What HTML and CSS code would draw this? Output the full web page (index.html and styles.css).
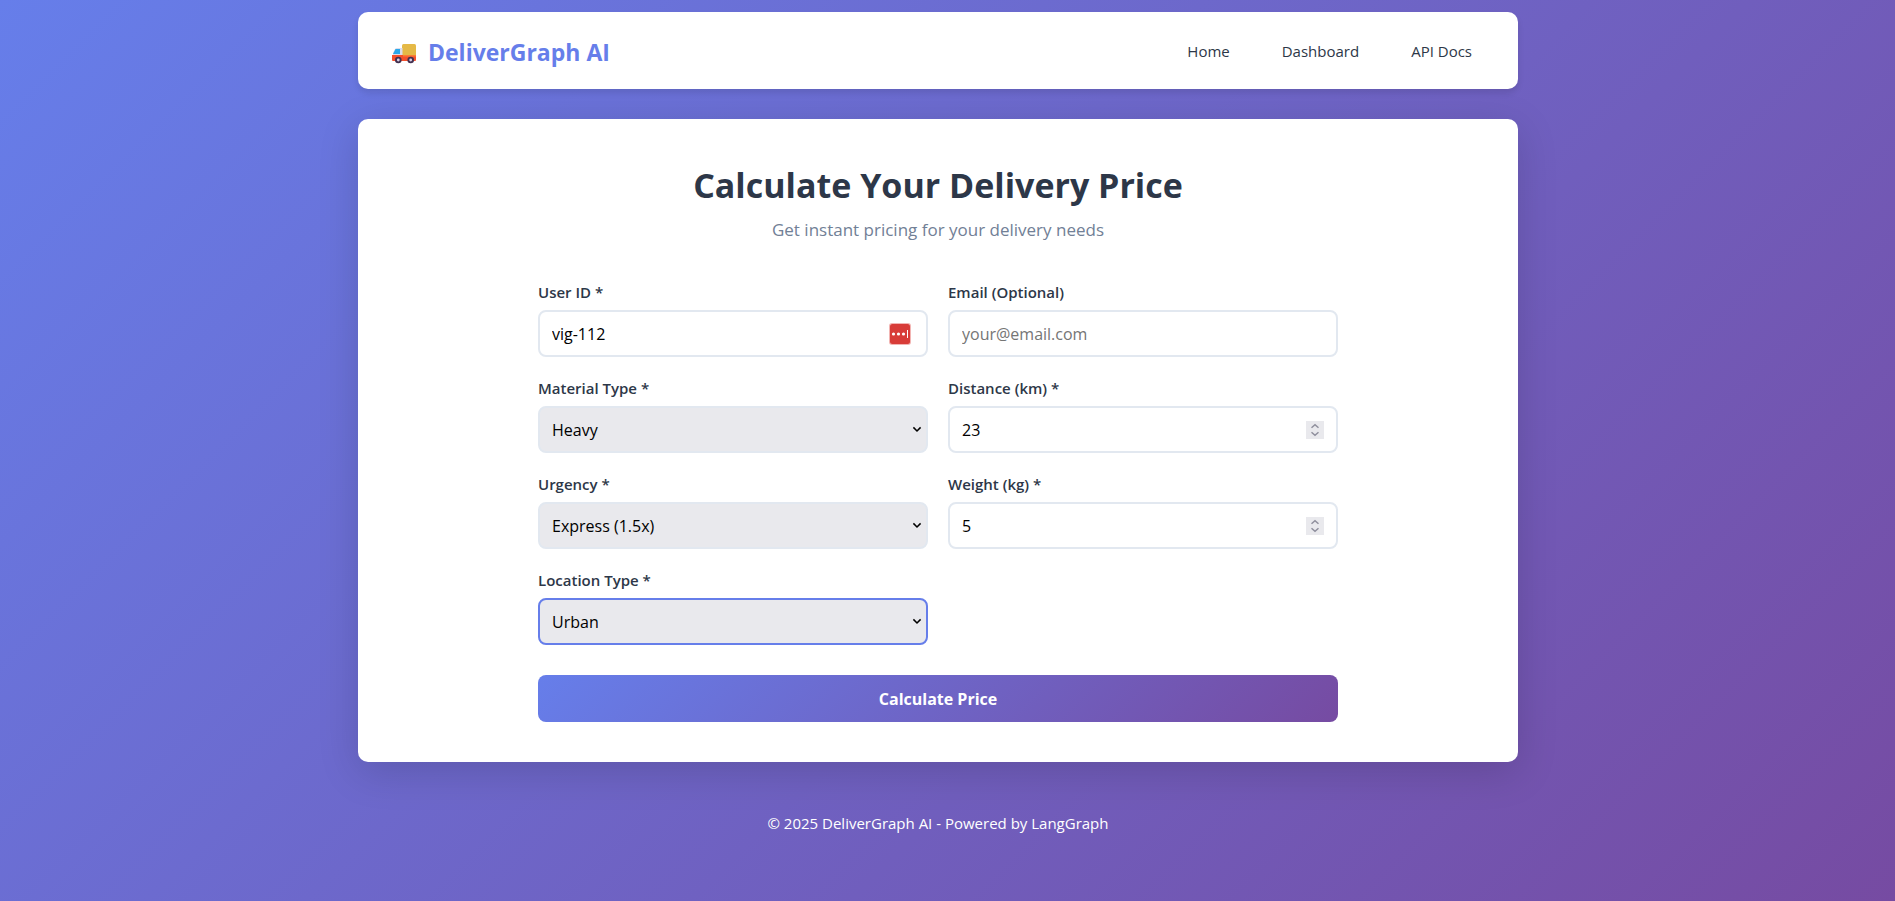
FILE: index.html
```html
<!DOCTYPE html>
<html lang="en">
<head>
<meta charset="utf-8">
<meta name="viewport" content="width=device-width, initial-scale=1">
<title>DeliverGraph AI</title>
<link rel="stylesheet" href="styles.css">
</head>
<body>
<div class="container">
  <header class="header">
    <div class="logo">
      <svg class="logo-icon" viewBox="0 0 24 20" aria-hidden="true">
        <rect x="10" y="0" width="14" height="12" rx="1.5" fill="#e5b946"/>
        <path d="M5 4h5.500v9H1V9l2-4Q3.600 4 5 4z" fill="#dcdcea"/>
        <path d="M3.500 5H8v5H1z" fill="#2aa8ea"/>
        <path d="M0 11h24v5q0 1-1 1H1q-1 0-1-1z" fill="#f4502c"/>
        <path d="M11 11h13v1.500H11z" fill="#fb7c35"/>
        <circle cx="6.300" cy="16" r="3.300" fill="#42304f"/>
        <circle cx="18.700" cy="16" r="3.300" fill="#42304f"/>
        <circle cx="6.300" cy="16" r="1.400" fill="#d8cfe6"/>
        <circle cx="18.700" cy="16" r="1.400" fill="#d8cfe6"/>
      </svg>
      <span>DeliverGraph AI</span>
    </div>
    <nav class="nav">
      <a href="#home">Home</a>
      <a href="#dashboard">Dashboard</a>
      <a href="#docs">API Docs</a>
    </nav>
  </header>
  <main class="card">
    <h1 class="title">Calculate Your Delivery Price</h1>
    <p class="subtitle">Get instant pricing for your delivery needs</p>
    <form class="form">
      <div class="grid">
        <div class="field">
          <label for="user">User ID *</label>
          <div class="control">
            <input id="user" type="text" value="vig-112">
            <svg class="key-icon" viewBox="0 0 22 22" aria-hidden="true">
              <rect width="22" height="22" rx="3" fill="#f2b5b3"/>
              <rect x="1" y="1" width="20" height="20" rx="2.500" fill="#d83c38"/>
              <circle cx="4.500" cy="11" r="1.600" fill="#fff"/>
              <circle cx="9.500" cy="11" r="1.600" fill="#fff"/>
              <circle cx="14.500" cy="11" r="1.600" fill="#fff"/>
              <rect x="18" y="7" width="1" height="8" fill="#fff"/>
            </svg>
          </div>
        </div>
        <div class="field">
          <label for="email">Email (Optional)</label>
          <div class="control"><input id="email" type="email" placeholder="your@email.com"></div>
        </div>
        <div class="field">
          <label for="material">Material Type *</label>
          <div class="control">
            <select id="material"><option>Heavy</option></select>
            <svg class="chevron" viewBox="0 0 8 5" aria-hidden="true"><path d="M.4.4 4 4 7.600.4"/></svg>
          </div>
        </div>
        <div class="field">
          <label for="distance">Distance (km) *</label>
          <div class="control">
            <input id="distance" type="number" value="23">
            <svg class="spinner" viewBox="0 0 18 18" aria-hidden="true"><path d="M5.500 6.800 9 3.700l3.500 3.100M5.500 11.200 9 14.300l3.500-3.100"/></svg>
          </div>
        </div>
        <div class="field">
          <label for="urgency">Urgency *</label>
          <div class="control">
            <select id="urgency"><option>Express (1.5x)</option></select>
            <svg class="chevron" viewBox="0 0 8 5" aria-hidden="true"><path d="M.4.4 4 4 7.600.4"/></svg>
          </div>
        </div>
        <div class="field">
          <label for="weight">Weight (kg) *</label>
          <div class="control">
            <input id="weight" type="number" value="5">
            <svg class="spinner" viewBox="0 0 18 18" aria-hidden="true"><path d="M5.500 6.800 9 3.700l3.500 3.100M5.500 11.200 9 14.300l3.500-3.100"/></svg>
          </div>
        </div>
        <div class="field">
          <label for="location">Location Type *</label>
          <div class="control">
            <select id="location" class="active"><option>Urban</option></select>
            <svg class="chevron" viewBox="0 0 8 5" aria-hidden="true"><path d="M.4.4 4 4 7.600.4"/></svg>
          </div>
        </div>
      </div>
      <button class="submit" type="button">Calculate Price</button>
    </form>
  </main>
  <footer class="footer">© 2025 DeliverGraph AI - Powered by LangGraph</footer>
</div>
</body>
</html>
```
FILE: styles.css
```css
* {
  box-sizing: border-box;
  margin: 0;
  padding: 0;
}

body {
  min-height: 100vh;
  padding-right: 19px;
  font-family: "Open Sans", "Noto Sans", sans-serif;
  font-size: 15px;
  color: #2d3748;
  background: linear-gradient(135deg, #667eea 0%, #764ba2 100%);
}

.container {
  max-width: 1200px;
  margin: 0 auto;
  padding: 12px 20px 20px;
}

.header {
  display: flex;
  justify-content: space-between;
  align-items: center;
  min-height: 77px;
  padding: 20px 30px;
  margin-bottom: 30px;
  background: #fff;
  border-radius: 10px;
  box-shadow: 0 4px 6px rgba(0, 0, 0, 0.1);
}

.logo {
  display: flex;
  align-items: center;
  gap: 12px;
  padding: 2px 0 0 4px;
  font-size: 23px;
  font-weight: 700;
  line-height: 32px;
  color: #667eea;
}

.logo-icon {
  width: 24px;
  height: 20px;
  margin-top: 4px;
}

.nav {
  display: flex;
  gap: 20px;
}

.nav a {
  padding: 8px 16px;
  line-height: 20px;
  color: #2d3748;
  text-decoration: none;
}

.card {
  padding: 40px;
  background: #fff;
  border-radius: 10px;
  box-shadow: 0 10px 40px rgba(0, 0, 0, 0.15);
}

.title {
  margin-bottom: 8px;
  font-size: 34px;
  font-weight: 700;
  line-height: 53px;
  text-align: center;
}

.subtitle {
  margin-bottom: 42px;
  font-size: 17px;
  line-height: 20px;
  text-align: center;
  color: #718096;
}

.form {
  max-width: 800px;
  margin: 0 auto;
}

.grid {
  display: grid;
  grid-template-columns: 1fr 1fr;
  gap: 21px 20px;
  margin-bottom: 30px;
}

.field label {
  display: block;
  margin-bottom: 7px;
  font-weight: 600;
  line-height: 21px;
}

.control {
  position: relative;
}

.control input,
.control select {
  display: block;
  width: 100%;
  height: 47px;
  padding: 10px 12px;
  font-family: inherit;
  font-size: 16px;
  color: #000;
  background: #fff;
  border: 2px solid #e2e8f0;
  border-radius: 8px;
  appearance: none;
}

.control input[type="number"] {
  appearance: textfield;
}

.control input::placeholder {
  color: #757575;
}

.control select {
  background: #e9e9ed;
}

.control select.active {
  border-color: #667eea;
}

.key-icon,
.chevron,
.spinner {
  position: absolute;
  top: 0;
  bottom: 0;
  margin: auto 0;
  pointer-events: none;
}

.key-icon {
  right: 17px;
  width: 22px;
  height: 22px;
}

.chevron {
  right: 7px;
  width: 8px;
  height: 5px;
  overflow: visible;
  fill: none;
  stroke: #000;
  stroke-width: 1.5;
}

.spinner {
  right: 14px;
  width: 18px;
  height: 18px;
  background: #e9e9ed;
  fill: none;
  stroke: #8f8f9d;
  stroke-width: 1.5;
}

.submit {
  display: block;
  width: 100%;
  height: 47px;
  font-family: inherit;
  font-size: 16px;
  font-weight: 700;
  color: #fff;
  background: linear-gradient(135deg, #667eea 0%, #764ba2 100%);
  border: 0;
  border-radius: 8px;
}

.footer {
  padding: 50px 0 20px;
  line-height: 22px;
  text-align: center;
  color: #fff;
}
```
